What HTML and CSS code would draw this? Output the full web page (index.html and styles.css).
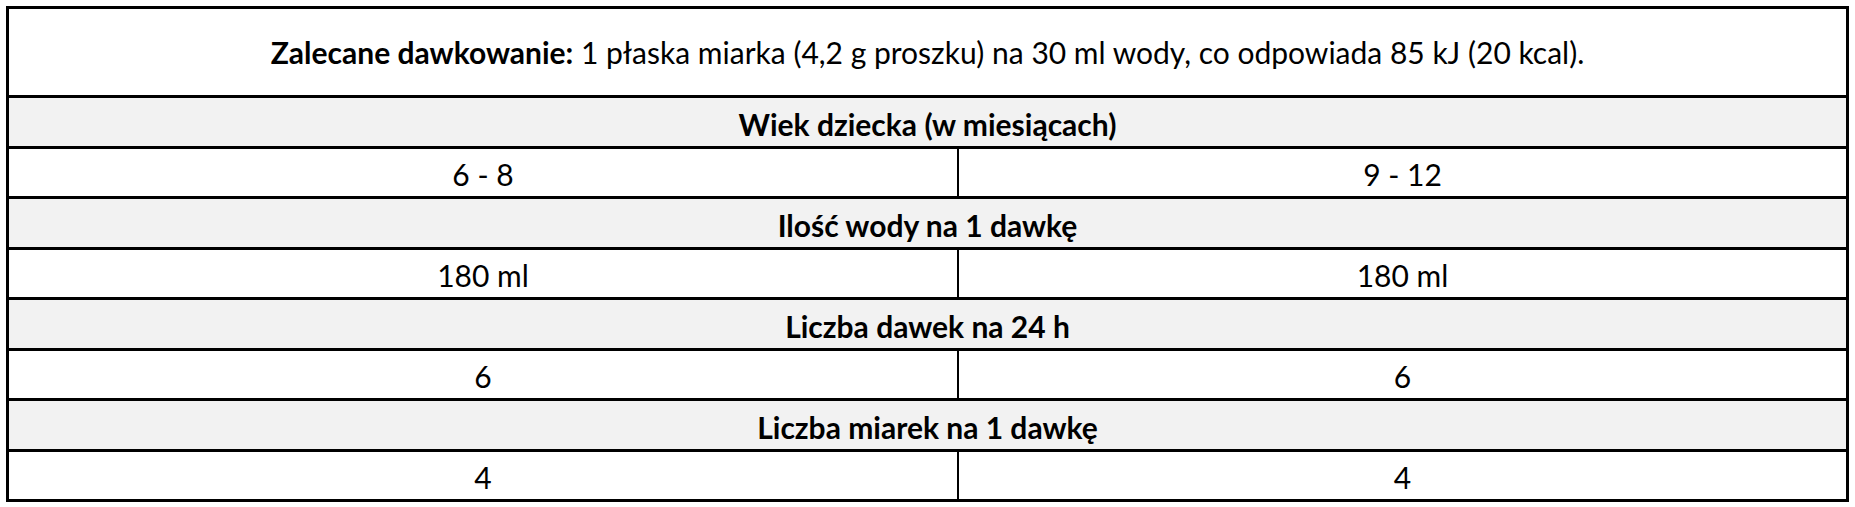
FILE: index.html
```
<!DOCTYPE html>
<html lang="pl">
<head>
<meta charset="utf-8">
<title>Zalecane dawkowanie</title>
<link rel="stylesheet" href="styles.css">
</head>
<body>
<div class="sheet">
  <div class="row intro"><span><b>Zalecane dawkowanie:</b> 1 płaska miarka (4,2 g proszku) na 30 ml wody, co odpowiada 85 kJ (20 kcal).</span></div>
  <div class="row head">Wiek dziecka (w miesiącach)</div>
  <div class="row pair"><div class="cell first">6 - 8</div><div class="cell">9 - 12</div></div>
  <div class="row head">Ilość wody na 1 dawkę</div>
  <div class="row pair"><div class="cell first">180 ml</div><div class="cell">180 ml</div></div>
  <div class="row head">Liczba dawek na 24 h</div>
  <div class="row pair"><div class="cell first">6</div><div class="cell">6</div></div>
  <div class="row head">Liczba miarek na 1 dawkę</div>
  <div class="row pair"><div class="cell first">4</div><div class="cell">4</div></div>
</div>
</body>
</html>
```

FILE: styles.css
```
html, body { background: #fff; }
body {
  margin: 6px 0 0 6px;
  font-family: Lato, "Open Sans", sans-serif;
  font-size: 30px;
  color: #000;
}
.sheet {
  width: 1843px;
  box-sizing: border-box;
  border: 3px solid #000;
}
.row + .row { border-top: 3px solid #000; }
.intro {
  height: 86px;
  display: flex;
  align-items: center;
  justify-content: center;
}
.intro b { font-weight: 700; }
.head {
  height: 45px;
  padding-top: 3px;
  background: #f2f2f2;
  font-weight: 700;
  display: flex;
  align-items: center;
  justify-content: center;
  line-height: 1;
}
.pair {
  height: 47px;
  display: grid;
  grid-template-columns: 950px 887px;
}
.cell {
  display: flex;
  align-items: center;
  justify-content: center;
  line-height: 1;
  padding-top: 2px;
  box-sizing: border-box;
  background: #fff;
}
.first { border-right: 2px solid #000; }
```
